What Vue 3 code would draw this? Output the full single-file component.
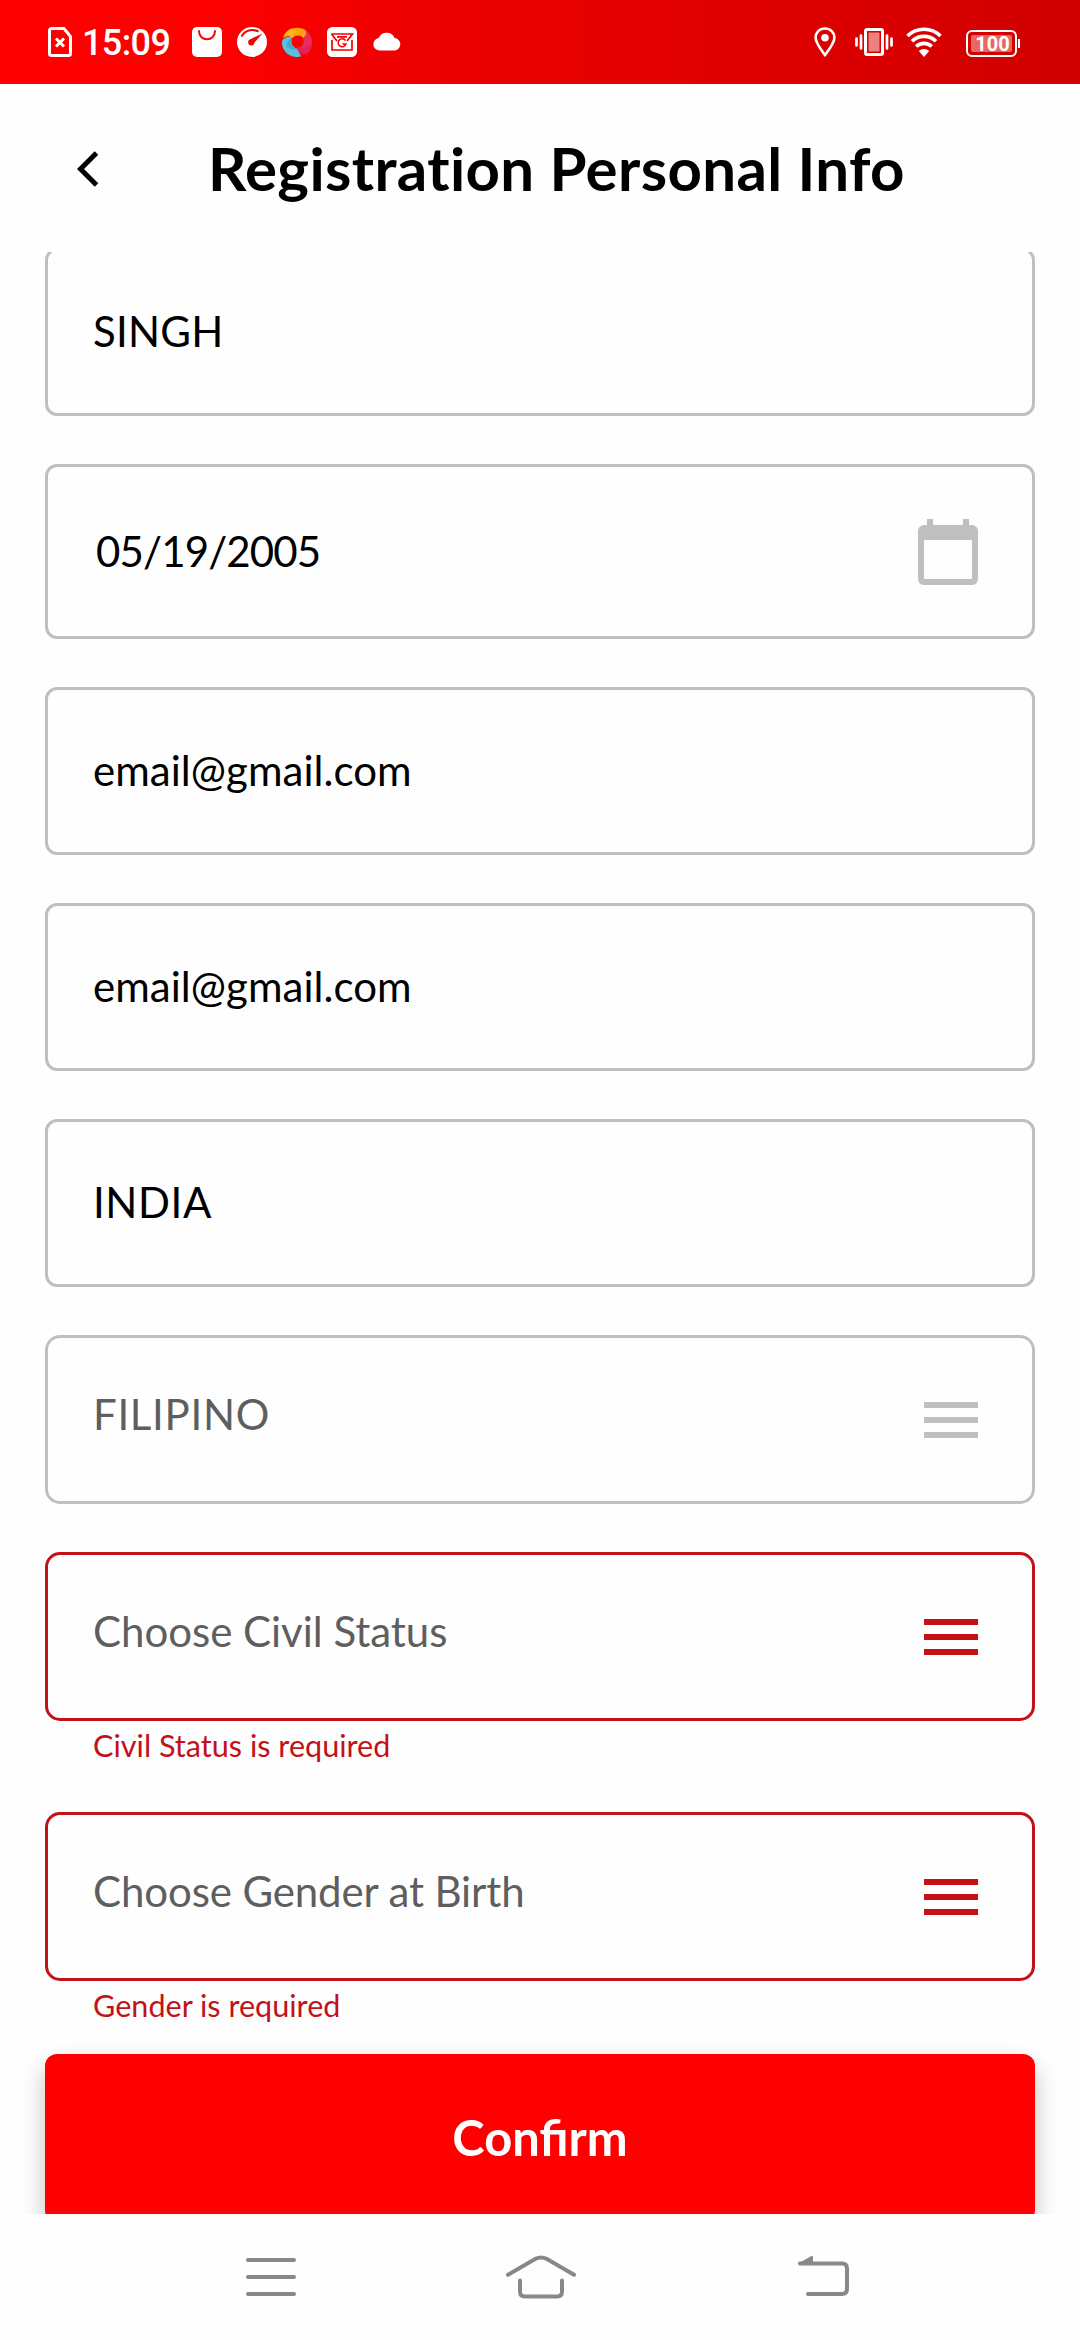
<script setup>
const fields = [
  { value: 'SINGH', kind: 'text', spacing: 0.25 },
  { value: '05/19/2005', kind: 'date', spacing: -0.85 },
  { value: 'email@gmail.com', kind: 'text', spacing: 0.05 },
  { value: 'email@gmail.com', kind: 'text', spacing: 0.05 },
  { value: 'INDIA', kind: 'text', spacing: 0.6 },
  { value: 'FILIPINO', kind: 'select', spacing: 0.68 },
  { value: 'Choose Civil Status', kind: 'select', spacing: -0.03, error: 'Civil Status is required' },
  { value: 'Choose Gender at Birth', kind: 'select', spacing: -0.12, error: 'Gender is required' },
]
</script>

<template>
  <div class="screen">
    <div class="status">
      <svg class="sim" width="24" height="30" viewBox="0 0 24 30" fill="none" stroke="#fff">
        <path d="M3.5 1.5H16L22.5 9.500V26.500A2 2 0 0 1 20.500 28.500H3.500A2 2 0 0 1 1.500 26.500V3.500A2 2 0 0 1 3.500 1.500Z" stroke-width="3" />
        <path d="M8 11.500L16 19.500M16 11.500L8 19.500" stroke-width="3" />
      </svg>
      <span class="time">15:09</span>
      <div class="apps">
        <svg width="30" height="30" viewBox="0 0 30 30">
          <rect width="30" height="30" rx="5" fill="#fff" />
          <path d="M7 4C7 15 23 15 23 4" fill="none" stroke="#f80000" stroke-width="2" stroke-linecap="round" />
        </svg>
        <svg width="30" height="30" viewBox="0 0 30 30">
          <circle cx="15" cy="15" r="15" fill="#fff" />
          <path d="M4.500 9.500C8 3 15 1.500 21.500 4.500" fill="none" stroke="#f60000" stroke-width="2" />
          <path d="M25.500 6.500L17.500 15.500A3.200 3.200 0 1 1 13.300 12.300Z" fill="#f60000" />
        </svg>
        <svg width="30" height="30" viewBox="0 0 30 30">
          <path d="M1 11C4 2 14 -2 23.500 3C25 7 25 10 23 13C20 8 15 7 10 11C7 8 3 9 1 11Z" fill="#fda50f" />
          <path d="M10 11C8 8 3 9 1 11C3 5 7 2 10 1.500C15 4 15 8 10 11Z" fill="#fbb416" />
          <path d="M23.500 3C31 8 32 19 26 26C21 28 15 26 13 21C20 21 23 18 21 11C24 9 25 6 23.500 3Z" fill="#ea2c5c" />
          <path d="M26 26C21 28 15 26 13 21C20 22 25 19 29.500 18C29 21 28 24 26 26Z" fill="#e0245a" />
          <path d="M0 14C3 9 8 9 10 11C8 16 11 20 15 22C17 26 19 28 19 29.500C8 32 -1 24 0 14Z" fill="#5ac2df" />
          <path d="M10 11C8 16 11 20 15 22C11 23 6 22 4 19C5 15 7 12 10 11Z" fill="#45aac8" />
        </svg>
        <svg width="30" height="30" viewBox="0 0 30 30">
          <rect width="30" height="30" rx="5.500" fill="#fff" />
          <g fill="none" stroke="#f00000" stroke-width="1.700">
            <path d="M5 13V23H25V13" />
            <path d="M4.500 7H25.500L20 14M4.500 7L10 14M10 9.800H20" />
            <path d="M18.500 13.500A4 4 0 1 0 19 17H15.500" stroke-width="1.500" />
          </g>
        </svg>
        <svg class="cloud" width="30" height="20" viewBox="0 0 30 20">
          <path d="M7 18.500A6.300 6.300 0 0 1 6.700 6A8.600 8.600 0 0 1 22.600 6A6.300 6.300 0 0 1 23 18.500Z" fill="#fff" />
        </svg>
      </div>
      <div class="system">
        <svg width="22" height="30" viewBox="0 0 22 30">
          <path d="M11 1.500C5.500 1.500 1.600 5.600 1.600 10.800C1.600 16 6.500 22 11 28C15.500 22 20.400 16 20.400 10.800C20.400 5.600 16.500 1.500 11 1.500Z" fill="none" stroke="#fff" stroke-width="2.600" />
          <circle cx="11" cy="10.700" r="3.800" fill="#fff" />
        </svg>
        <svg class="vibrate" width="38" height="30" viewBox="0 0 38 30">
          <rect x="10.500" y="2.500" width="17" height="25" rx="1.500" fill="none" stroke="#fff" stroke-width="3" />
          <rect x="13.500" y="5.500" width="11" height="19" fill="#ee8080" />
          <path d="M6 8.500V21.500M32 8.500V21.500M1.500 11.500V18.500M36.500 11.500V18.500" stroke="#fff" stroke-width="2.700" stroke-linecap="round" />
        </svg>
        <svg class="wifi" width="36" height="30" viewBox="0 0 36 30">
          <g fill="none" stroke="#fff" stroke-width="3.600">
            <path d="M1.500 9A23.500 23.500 0 0 1 34.500 9" />
            <path d="M6 14.300A17 17 0 0 1 30 14.300" />
            <path d="M10.200 19.600A11 11 0 0 1 25.800 19.600" />
          </g>
          <path d="M12.800 24A7.500 7.500 0 0 1 23.200 24L18 30Z" fill="#fff" />
        </svg>
        <div class="battery">
          <div class="cell"><div class="charge">100</div></div>
          <div class="nub"></div>
        </div>
      </div>
    </div>

    <header class="bar">
      <svg class="back" width="22" height="36" viewBox="0 0 22 36" fill="none">
        <path d="M19.500 2L3.500 18L19.500 34" stroke="#000" stroke-width="5" />
      </svg>
      <h1>Registration Personal Info</h1>
    </header>

    <main class="form">
      <div v-for="(field, i) in fields" :key="i" class="item">
        <div class="field" :class="[field.kind, { invalid: field.error }]">
          <span :style="{ letterSpacing: field.spacing + 'px' }">{{ field.value }}</span>
          <svg v-if="field.kind === 'date'" width="60" height="66" viewBox="0 0 60 66">
            <path fill-rule="evenodd" fill="#bfbfbf" d="M9 0H15V6H45V0H51V6H54A6 6 0 0 1 60 12V60A6 6 0 0 1 54 66H6A6 6 0 0 1 0 60V12A6 6 0 0 1 6 6H9ZM6 21V60H54V21Z" />
          </svg>
          <svg v-if="field.kind === 'select'" width="54" height="36" viewBox="0 0 54 36" fill="currentColor">
            <path d="M0 0H54V6H0ZM0 15H54V21H0ZM0 30H54V36H0Z" />
          </svg>
        </div>
        <p v-if="field.error" class="error">{{ field.error }}</p>
      </div>
      <button class="confirm" type="button">Confirm</button>
    </main>

    <nav class="nav">
      <svg width="50" height="38" viewBox="0 0 50 38" stroke="#888" stroke-width="4" stroke-linecap="round">
        <path d="M2 2H48M2 19H48M2 36H48" />
      </svg>
      <svg class="home" width="70" height="44" viewBox="0 0 70 44" fill="none" stroke="#888" stroke-width="4" stroke-linecap="round">
        <path d="M2 19.800L29.500 3.800Q35 1 40.500 3.800L68 19.800" />
        <path d="M14 25.500V36.500Q14 41.500 19 41.500H51Q56 41.500 56 36.500V25.500" />
      </svg>
      <svg class="return" width="51" height="42" viewBox="0 0 51 42" fill="none" stroke="#888" stroke-width="4" stroke-linecap="round">
        <path d="M2 8.500H44Q49 8.500 49 13.500V34Q49 39 44 39H10" />
        <path d="M1 8L13.500 1Q15 0.500 15 2V8.500Z" fill="#888" stroke="none" />
      </svg>
    </nav>
  </div>
</template>

<style>
body {
  margin: 0;
  background: #fefefe;
}
</style>

<style scoped>
.screen {
  width: 1080px;
  height: 2340px;
  display: flex;
  flex-direction: column;
  overflow: hidden;
  background: #fefefe;
  font-family: Lato, sans-serif;
  color: #000;
}
svg {
  display: block;
  flex: none;
}
.status {
  flex: none;
  height: 84px;
  box-sizing: border-box;
  padding: 0 60px 0 48px;
  display: flex;
  align-items: center;
  background: linear-gradient(90deg, #f00 18%, #ec0000 40%, #de0000 72%, #d00000 100%);
}
.time {
  width: 110px;
  margin-left: 10px;
  padding-top: 2px;
  font: 500 36px/42px Roboto, sans-serif;
  letter-spacing: -0.6px;
  color: #fff;
}
.apps {
  display: flex;
  align-items: center;
  gap: 15px;
}
.cloud {
  padding-bottom: 1px;
}
.system {
  margin-left: auto;
  display: flex;
  align-items: center;
}
.vibrate {
  margin-left: 19px;
}
.wifi {
  margin-left: 13px;
}
.battery {
  margin: 3px 0 0 24px;
  display: flex;
  align-items: center;
  gap: 1px;
}
.cell {
  box-sizing: border-box;
  width: 51px;
  height: 27px;
  padding: 3px;
  border: 2px solid #fff;
  border-radius: 6px;
}
.charge {
  height: 17px;
  border-radius: 2px;
  background: #e76666;
  font: 700 20px/18px Roboto, sans-serif;
  text-align: center;
  text-indent: 2px;
  color: #fff;
}
.nub {
  width: 2px;
  height: 9px;
  background: #fff;
}
.bar {
  flex: none;
  height: 168px;
  box-sizing: border-box;
  padding: 0 77px 0 77px;
  display: flex;
  align-items: center;
  gap: 109px;
}
.back {
  margin-top: 2px;
}
h1 {
  margin: 0;
  font-size: 60px;
  line-height: 72px;
  font-weight: 700;
  letter-spacing: 0.37px;
  white-space: nowrap;
}
.form {
  flex: none;
  height: 1962px;
  box-sizing: border-box;
  padding: 0 45px;
  overflow: hidden;
}
.item {
  margin-bottom: 48px;
}
.item:first-child {
  margin-top: -4px;
}
.field {
  height: 168px;
  box-sizing: border-box;
  padding: 0 54px 0 45px;
  border: 3px solid #bfbfbf;
  border-radius: 12px;
  display: flex;
  align-items: center;
  justify-content: space-between;
  font-size: 42px;
  line-height: 50px;
  color: #000;
}
.field span {
  padding-bottom: 3px;
}
.field.date {
  height: 175px;
  padding-left: 48px;
}
.field.date span {
  padding-bottom: 1px;
}
.field.select {
  height: 169px;
  border-radius: 15px;
  color: #bfbfbf;
}
.field.select span {
  padding-bottom: 12px;
  color: #5e5e5e;
}
.field.select.invalid {
  border-color: #c31118;
  color: #c31118;
}
.error {
  height: 43px;
  margin: 0 48px;
  padding-top: 8px;
  box-sizing: border-box;
  font-size: 30.6px;
  line-height: 34px;
  color: #c31118;
}
.item:last-of-type {
  margin-bottom: 30px;
}
.confirm {
  display: block;
  width: 990px;
  height: 168px;
  padding: 0 0 2px;
  border: 0;
  border-radius: 12px;
  background: #f00;
  box-shadow: 0 12px 24px rgba(0, 0, 0, 0.24);
  font: 700 48.8px/58px Lato, sans-serif;
  color: #fff;
}
.nav {
  flex: 1;
  display: flex;
  align-items: center;
  padding-left: 246px;
}
.home {
  margin-left: 210px;
}
.return {
  margin: 0 0 3px 222px;
}
</style>
